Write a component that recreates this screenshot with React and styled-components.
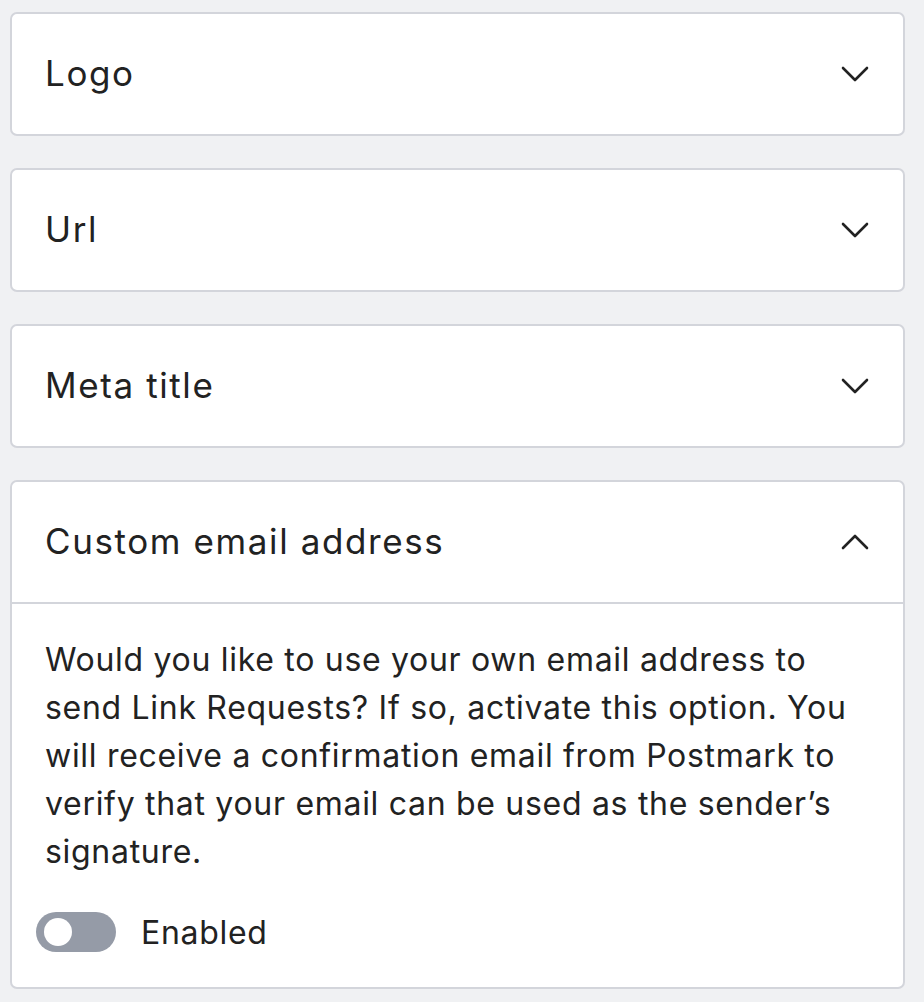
import React, { useState } from "react";
import styled, { createGlobalStyle } from "styled-components";

const GlobalStyle = createGlobalStyle`
  html, body {
    margin: 0;
    padding: 0;
    background: #f0f1f3;
  }
  body {
    font-family: "Inter", "Noto Sans", sans-serif;
    color: #222222;
  }
`;

const sections = [
  { id: "logo", title: "Logo" },
  { id: "url", title: "Url" },
  { id: "meta", title: "Meta title" },
  { id: "email", title: "Custom email address" },
];

const Chevron = ({ up }) => (
  <ChevronSvg viewBox="0 0 28 16" $up={up}>
    <path
      d="M2 2 L14 14 L26 2"
      fill="none"
      stroke="#222"
      strokeWidth="2.6"
      strokeLinecap="round"
      strokeLinejoin="round"
    />
  </ChevronSvg>
);

const App = () => {
  const [open, setOpen] = useState("email");
  const [enabled, setEnabled] = useState(false);

  return (
    <>
      <GlobalStyle />
      <Wrapper>
        {sections.map((s) => (
          <Card key={s.id}>
            <Header onClick={() => setOpen(open === s.id ? null : s.id)}>
              <Title>{s.title}</Title>
              <Chevron up={open === s.id} />
            </Header>
            {open === s.id && s.id === "email" ? (
              <Body>
                <Description>
                  Would you like to use your own email address to send Link
                  Requests? If so, activate this option. You will receive a
                  confirmation email from Postmark to verify that your email
                  can be used as the sender’s signature.
                </Description>
                <ToggleRow>
                  <Toggle $on={enabled} onClick={() => setEnabled(!enabled)}>
                    <Knob $on={enabled} />
                  </Toggle>
                  <ToggleLabel>Enabled</ToggleLabel>
                </ToggleRow>
              </Body>
            ) : null}
          </Card>
        ))}
      </Wrapper>
    </>
  );
};

export default App;

const Wrapper = styled.div`
  display: flex;
  flex-direction: column;
  gap: 32px;
  padding: 12px 19px 14px 10px;
`;

const Card = styled.div`
  background: #ffffff;
  border: 2px solid #d3d5db;
  border-radius: 7px;
`;

const Header = styled.div`
  display: flex;
  align-items: center;
  justify-content: space-between;
  height: 120px;
  padding: 0 34px 0 33px;
  cursor: pointer;
`;

const Title = styled.div`
  margin-top: -3px;
  font-size: 35px;
  line-height: 44px;
  letter-spacing: 1.6px;
  font-weight: 400;
  color: #222;
`;

const ChevronSvg = styled.svg`
  width: 28px;
  height: 16px;
  transform: ${(p) => (p.$up ? "rotate(180deg)" : "none")};
`;

const Body = styled.div`
  border-top: 2px solid #d3d5db;
  padding: 32px 33px 35px 33px;
`;

const Description = styled.p`
  margin: 0;
  font-size: 32px;
  line-height: 48px;
  letter-spacing: 0.7px;
  color: #222;
`;

const ToggleRow = styled.div`
  display: flex;
  align-items: center;
  gap: 25px;
  margin-top: 36px;
  margin-left: -9px;
`;

const Toggle = styled.div`
  position: relative;
  width: 80px;
  height: 40px;
  border-radius: 20px;
  background: ${(p) => (p.$on ? "#2563eb" : "#959ba7")};
  cursor: pointer;
`;

const Knob = styled.div`
  position: absolute;
  top: 6px;
  left: ${(p) => (p.$on ? "46px" : "8px")};
  width: 28px;
  height: 28px;
  border-radius: 50%;
  background: #ffffff;
`;

const ToggleLabel = styled.span`
  font-size: 32px;
  letter-spacing: 0.7px;
  color: #222;
`;
